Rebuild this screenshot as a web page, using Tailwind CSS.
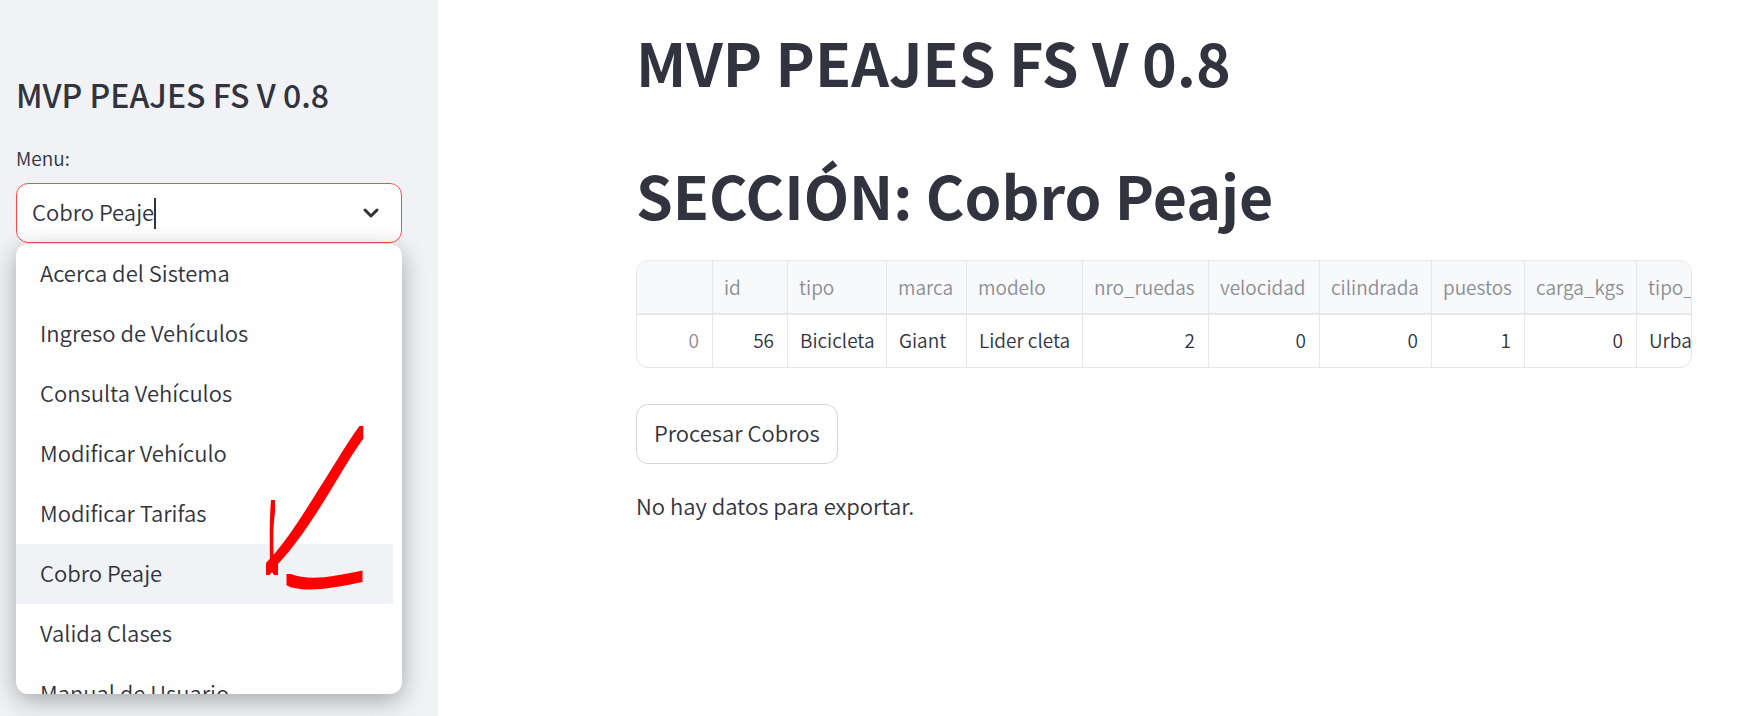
<!DOCTYPE html>
<html lang="es">
<head>
<meta charset="utf-8">
<meta name="viewport" content="width=device-width, initial-scale=1">
<title>MVP PEAJES FS V 0.8</title>
<script src="https://cdn.jsdelivr.net/npm/@tailwindcss/browser@4"></script>
</head>
<body class="flex min-h-screen overflow-hidden bg-white font-['Noto_Sans_CJK_JP','Noto_Sans',sans-serif] text-[22px] font-[350] text-[#31333f]">
<aside class="w-[438px] shrink-0 bg-[#f0f2f6] pt-[72px] pr-9 pl-4">
  <h2 class="text-[32px] leading-[44px] font-medium">MVP PEAJES FS V 0.8</h2>
  <label for="menu" class="mt-[26px] block pb-[9px] text-[19px] leading-8">Menu:</label>
  <div class="relative">
    <div class="flex h-[60px] items-center rounded-xl border border-[#ff4b4b] bg-white pr-[18px] pl-[15px]">
      <input id="menu" type="text" role="combobox" aria-expanded="true" aria-controls="opciones" value="Cobro Peaje" class="mb-1 field-sizing-content h-10 bg-transparent outline-none">
      <span class="h-[31px] w-0.5 bg-[#31333f]"></span>
      <svg class="ml-auto h-6 w-6" viewBox="0 0 24 24" fill="none" stroke="#31333f" stroke-width="3" stroke-linecap="round" stroke-linejoin="round" aria-hidden="true"><path d="M6 9l6 6 6-6"/></svg>
    </div>
    <ul id="opciones" role="listbox" class="absolute inset-x-0 top-[61px] h-[450px] overflow-hidden rounded-xl bg-white shadow-[0_6px_24px_rgba(0,0,0,0.32)]">
      <li role="option" class="mr-[9px] h-[60px] px-6 leading-[56px]">Acerca del Sistema</li>
      <li role="option" class="mr-[9px] h-[60px] px-6 leading-[56px]">Ingreso de Vehículos</li>
      <li role="option" class="mr-[9px] h-[60px] px-6 leading-[56px]">Consulta Vehículos</li>
      <li role="option" class="mr-[9px] h-[60px] px-6 leading-[56px]">Modificar Vehículo</li>
      <li role="option" class="mr-[9px] h-[60px] px-6 leading-[56px]">Modificar Tarifas</li>
      <li role="option" aria-selected="true" class="mr-[9px] h-[60px] bg-[#f0f2f6] px-6 leading-[56px]">Cobro Peaje</li>
      <li role="option" class="mr-[9px] h-[60px] px-6 leading-[56px]">Valida Clases</li>
      <li role="option" class="mr-[9px] h-[60px] px-6 leading-[56px]">Manual de Usuario</li>
    </ul>
    <svg class="absolute top-[227px] left-[234px] h-[190px] w-[130px]" viewBox="0 0 130 190" fill="#f00" aria-hidden="true">
      <path d="M109.500 16H113.300V28.800C101 45 88 69 74 91C61 112 45 136 28 154V165H24L22 162L19.500 165H16V153L26 142C40 125 54 103 67 82C82 59 96 34 109.500 16Z"/>
      <path d="M21 90H25V102C23 117 23 129 23.500 145L24 154H20C19.500 130 19.500 108 21 90Z"/>
      <path d="M36.500 164H41C59 171 82 167 112.500 160.500V172C88 177 67 181 50 179C43 178 39 177 36.500 175Z"/>
    </svg>
  </div>
</aside>
<main class="min-w-0 flex-1 pt-[22px] pr-[68px] pl-[198px]">
  <h1 class="text-[59px] leading-[80px] font-bold">MVP PEAJES FS V 0.8</h1>
  <h1 class="mt-[53px] text-[59px] leading-[80px] font-bold">SECCIÓN: Cobro Peaje</h1>
  <div class="mt-[25px] overflow-hidden rounded-xl border border-[#e6e7ea]">
    <table class="w-[1180px] table-fixed border-separate border-spacing-0 text-[19px]">
      <colgroup><col class="w-[76px]"><col class="w-[75px]"><col class="w-[99px]"><col class="w-[80px]"><col class="w-[116px]"><col class="w-[126px]"><col class="w-[111px]"><col class="w-[112px]"><col class="w-[93px]"><col class="w-[112px]"><col></colgroup>
      <thead class="bg-[#f8f9fb] text-left leading-[52px] text-[#8b8d96] [&_th]:border-r [&_th]:border-b-2 [&_th]:border-[#e6e7ea] [&_th]:px-[11px] [&_th]:font-[350]">
        <tr><th></th><th>id</th><th>tipo</th><th>marca</th><th>modelo</th><th>nro_ruedas</th><th>velocidad</th><th>cilindrada</th><th>puestos</th><th>carga_kgs</th><th>tipo_</th></tr>
      </thead>
      <tbody class="leading-[50px] [&_td]:border-r [&_td]:border-[#e6e7ea] [&_td]:pr-[13px] [&_td]:pb-0.5 [&_td]:pl-3">
        <tr><td class="text-right text-[#8b8d96]">0</td><td class="text-right">56</td><td>Bicicleta</td><td>Giant</td><td class="whitespace-nowrap">Lider cleta</td><td class="text-right">2</td><td class="text-right">0</td><td class="text-right">0</td><td class="text-right">1</td><td class="text-right">0</td><td>Urbana</td></tr>
      </tbody>
    </table>
  </div>
  <button type="button" class="mt-9 block h-[60px] rounded-xl border border-[#d6d6d9] bg-white px-[17px] pb-1">Procesar Cobros</button>
  <p class="mt-[21px] leading-10">No hay datos para exportar.</p>
</main>
</body>
</html>
